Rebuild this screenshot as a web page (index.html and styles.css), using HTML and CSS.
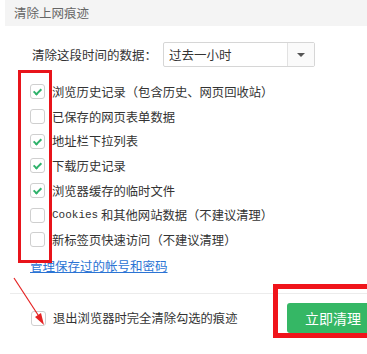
FILE: index.html
```html
<!DOCTYPE html>
<html lang="zh-CN">
<head>
    <meta charset="UTF-8">
    <meta name="viewport" content="width=device-width, initial-scale=1.0">
    <title>清除上网痕迹</title>
    <link rel="stylesheet" href="styles.css">
</head>
<body>
    <div class="panel">
        <div class="header">清除上网痕迹</div>

        <div class="range">
            <span class="range-label">清除这段时间的数据：</span>
            <div class="select">
                <span class="select-value">过去一小时</span>
                <span class="select-arrow"></span>
            </div>
        </div>

        <div class="options">
            <label class="option"><span class="check checked"></span>浏览历史记录（包含历史、网页回收站）</label>
            <label class="option"><span class="check"></span>已保存的网页表单数据</label>
            <label class="option"><span class="check checked"></span>地址栏下拉列表</label>
            <label class="option"><span class="check checked"></span>下载历史记录</label>
            <label class="option"><span class="check checked"></span>浏览器缓存的临时文件</label>
            <label class="option"><span class="check"></span><span class="latin">Cookies</span>&nbsp;和其他网站数据（不建议清理）</label>
            <label class="option"><span class="check"></span>新标签页快速访问（不建议清理）</label>
            <!-- red annotation box -->
            <div class="mark-list"></div>
        </div>

        <a class="manage" href="#">管理保存过的帐号和密码</a>

        <div class="footer">
            <label class="option exit"><span class="check"></span>退出浏览器时完全清除勾选的痕迹</label>
            <div class="action">
                <button class="clear-btn">立即清理</button>
                <div class="mark-btn"></div>
            </div>
        </div>

        <svg class="arrow" width="60" height="70" viewBox="0 0 60 70">
            <line x1="14" y1="8" x2="40" y2="48" stroke="#e52222" stroke-width="1.2"/>
            <polygon points="44,55 35,47 41,43" fill="#e52222"/>
        </svg>
    </div>
</body>
</html>
```

FILE: styles.css
```css
body {
    margin: 0;
    background: #fff;
    font-family: "Noto Sans CJK SC", "Noto Sans", sans-serif;
    font-size: 12.3px;
    color: #333;
    overflow: hidden;
}

.panel {
    position: relative;
    width: 367px;
    height: 354px;
    overflow: hidden;
}

.header {
    margin-left: 5px;
    height: 26px;
    line-height: 26px;
    padding-left: 9px;
    background: #f4f4f4;
    color: #666;
    font-size: 12.5px;
}

.range {
    display: flex;
    align-items: center;
    margin-top: 16px;
    padding-left: 32px;
    height: 25px;
}

.range-label {
    width: 131px;
    font-size: 12.5px;
}

.select {
    display: flex;
    align-items: center;
    width: 150px;
    height: 23px;
    border: 1px solid #d6d6d6;
    border-radius: 2px;
    background: #fff;
}

.select-value {
    flex: 1;
    padding-left: 5px;
    font-size: 12.5px;
}

.select-arrow {
    width: 26px;
    height: 23px;
    border-left: 1px solid #e2e2e2;
    background: #fafafa;
    position: relative;
}

.select-arrow::after {
    content: "";
    position: absolute;
    left: 9px;
    top: 10px;
    border-left: 4px solid transparent;
    border-right: 4px solid transparent;
    border-top: 4px solid #555;
}

.options {
    position: relative;
    margin-top: 12.5px;
    padding-left: 30px;
}

.option {
    display: flex;
    align-items: center;
    height: 24.7px;
    white-space: nowrap;
}

.check {
    box-sizing: border-box;
    width: 15px;
    height: 15px;
    margin-right: 7px;
    border: 1px solid #cfcfcf;
    border-radius: 3px;
    background: #fff;
    position: relative;
    flex-shrink: 0;
}

.check.checked::after {
    content: "";
    position: absolute;
    left: 4px;
    top: 2px;
    width: 3px;
    height: 6px;
    border-right: 2px solid #2fb26b;
    border-bottom: 2px solid #2fb26b;
    transform: rotate(45deg);
}

.latin {
    font-family: "Liberation Mono", monospace;
    font-size: 11px;
}

.mark-list {
    position: absolute;
    left: 18px;
    top: -9.5px;
    width: 28px;
    height: 187px;
    border: 3px solid #e8141b;
}

.manage {
    display: block;
    margin-top: 6px;
    margin-left: 30px;
    width: max-content;
    line-height: 16px;
    color: #2b74d4;
    font-size: 12.5px;
}

.footer {
    display: flex;
    align-items: flex-start;
    margin-top: 19px;
    margin-left: 10px;
    margin-right: -12px;
    padding-top: 9px;
    padding-left: 21px;
    border-top: 1px solid #ececec;
}

.exit {
    height: 30px;
}

.action {
    position: relative;
    margin-left: auto;
}

.clear-btn {
    display: block;
    width: 92px;
    height: 30px;
    border: none;
    border-radius: 3px;
    background: #35b765;
    color: #fff;
    font-family: inherit;
    font-size: 14px;
}

.mark-btn {
    position: absolute;
    left: -14px;
    top: -19px;
    right: -20px;
    bottom: -5px;
    border: 5px solid #f0141b;
}

.arrow {
    position: absolute;
    left: 0;
    top: 270px;
}
```
